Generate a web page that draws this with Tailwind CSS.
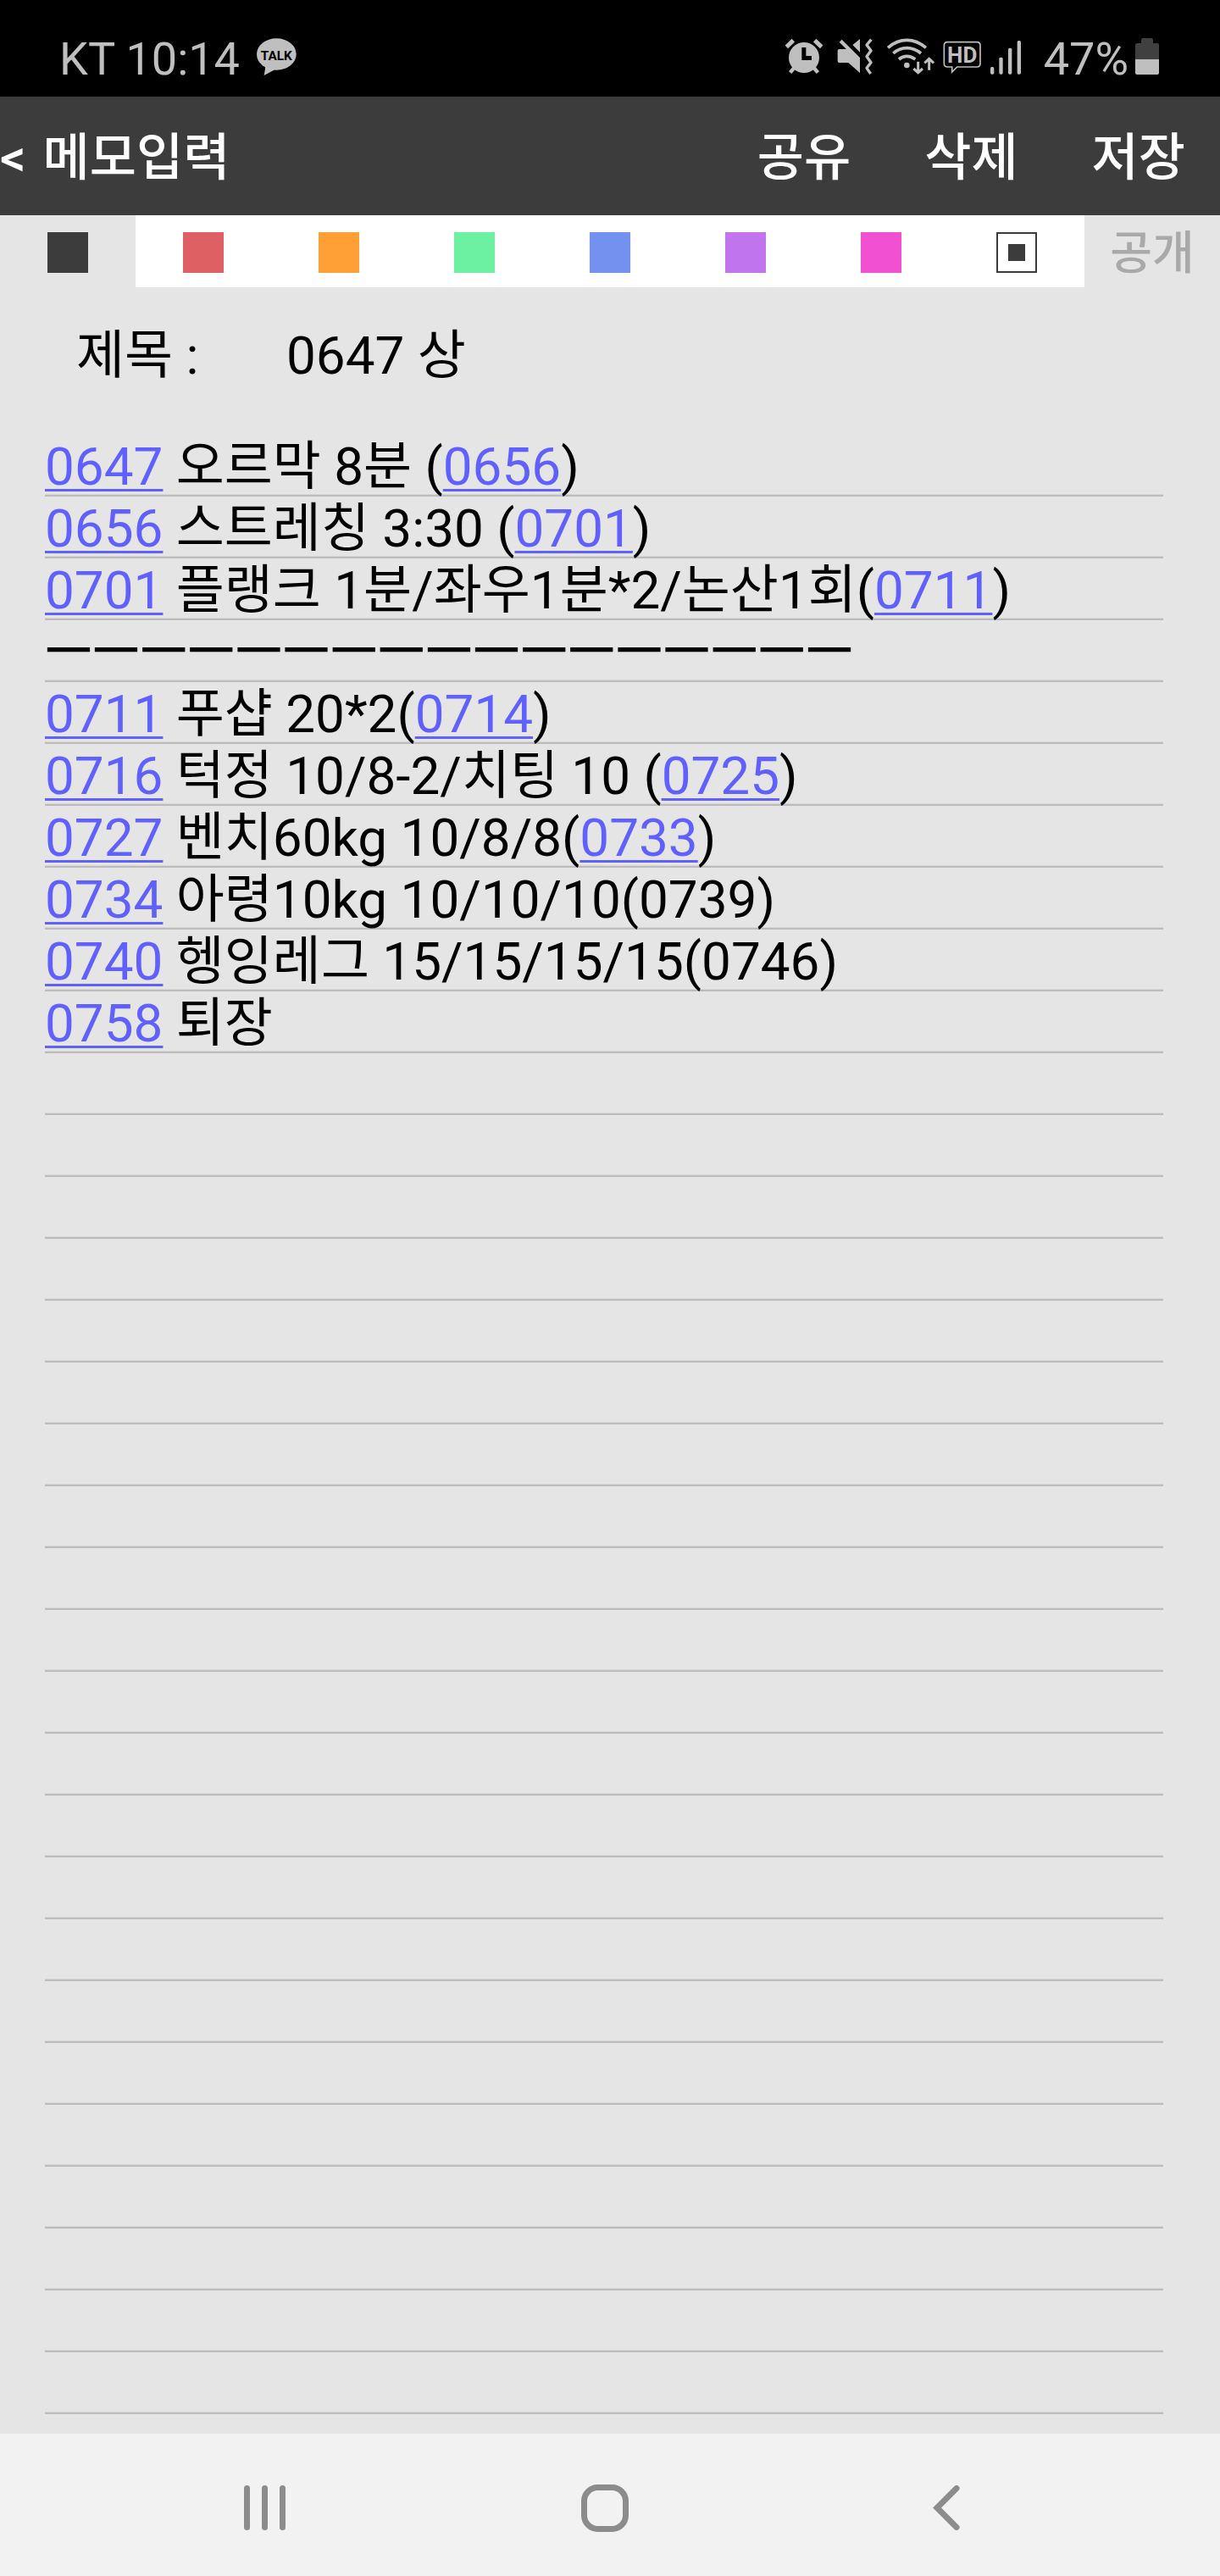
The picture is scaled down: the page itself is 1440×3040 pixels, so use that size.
<!DOCTYPE html>
<html lang="ko">
<head>
    <meta charset="UTF-8">
    <meta name="viewport" content="width=device-width, initial-scale=1.0">
    <title>메모입력</title>
    <script src="https://cdn.jsdelivr.net/npm/@tailwindcss/browser@4"></script>
</head>
<body class="bg-[#e5e5e5] min-h-screen flex flex-col text-black font-['Roboto','Noto_Sans_CJK_KR',sans-serif]">

    <!-- 상태 표시줄 -->
    <div class="h-[114px] pt-[19px] pl-[70px] pr-[72px] bg-black text-[#bfbfbf] text-[54px] leading-[60px] flex items-center justify-between">
        <div class="flex items-center gap-[19px]">
            <span class="pt-1.5">KT 10:14</span>
            <svg class="w-[49px] h-[46px]" viewBox="906 132 147 138" fill="currentColor">
                <ellipse cx="979" cy="192" rx="70" ry="56"/>
                <path d="M941 232L935 267L978 244z"/>
                <text x="979" y="212" text-anchor="middle" font-size="46" font-weight="700" fill="#000">TALK</text>
            </svg>
        </div>
        <div class="flex items-center gap-2">
            <svg class="w-[52px] h-[45px]" viewBox="72 72 156 135" fill="none" stroke="currentColor">
                <circle cx="147" cy="144" r="54" fill="currentColor" stroke="none"/>
                <path stroke-width="15" d="M85 106L109 83M185 83L209 106"/>
                <path stroke-width="13" d="M112 180L98 197M182 180L196 197"/>
                <path fill="#000" stroke="none" d="M139 108h15v30h20v15h-35z"/>
            </svg>
            <svg class="w-[52px] h-[45px]" viewBox="252 72 156 135" fill="currentColor">
                <path d="M272 114H297L272 89L281 80L345 144V198L304 162H272q-6 0-6-6V120q0-6 6-6z"/>
                <path d="M345 78V125L319 99z"/>
                <path fill="none" stroke="currentColor" stroke-width="10" stroke-linejoin="round" d="M385 80L369 99L384 119L369 140L384 161L369 181L383 201"/>
            </svg>
            <svg class="w-[60px] h-[45px]" viewBox="432 72 180 135" fill="none" stroke="currentColor">
                <path stroke-width="11" d="M444 109Q475 82 511 82T579 109M463 129Q484 110 511 110T561 129M483 150Q496 139 511 139T541 150"/>
                <circle cx="511" cy="171" r="10" fill="currentColor" stroke="none"/>
                <path stroke-width="9" d="M551 158V196M535 183L551 197L567 183M590 188V150M574 163L590 148L606 163"/>
            </svg>
            <svg class="w-[48px] h-[45px]" viewBox="636 72 144 135" fill="none" stroke="currentColor">
                <path stroke-width="5" d="M655 89H759q12 0 12 12V165q0 12-12 12H689L671 195V177H655q-12 0-12-12V101q0-12 12-12z"/>
                <text x="707" y="162" text-anchor="middle" font-size="78" font-weight="700" fill="currentColor" stroke="none">HD</text>
            </svg>
            <svg class="w-[40px] h-[45px]" viewBox="804 72 120 135" fill="currentColor">
                <rect x="807" y="177" width="13" height="26" rx="5"/>
                <rect x="838" y="143" width="13" height="60" rx="5"/>
                <rect x="870" y="110" width="13" height="93" rx="5"/>
                <rect x="902" y="84" width="13" height="119" rx="5"/>
            </svg>
            <span class="ml-4 pt-1.5">47%</span>
            <svg class="w-[28px] h-[45px]" viewBox="0 0 28 45">
                <path fill="#404040" d="M7 8V3q0-2 2-2H19q2 0 2 2V8z"/>
                <path fill="#404040" d="M0 27V9q0-2 2-2H26q2 0 2 2V27z"/>
                <path fill="#bfbfbf" d="M0 26H28V42q0 2-2 2H2q-2 0-2-2z"/>
            </svg>
        </div>
    </div>

    <!-- 상단 메뉴 -->
    <header class="h-[140px] pt-1.5 bg-[#3c3c3c] text-white text-[60px] leading-[66px] font-medium flex items-center justify-between pr-[41px]">
        <button type="button" class="flex gap-5"><span>&lt;</span><span>메모입력</span></button>
        <div class="flex gap-[87px]">
            <button type="button">공유</button>
            <button type="button">삭제</button>
            <button type="button">저장</button>
        </div>
    </header>

    <!-- 색상 선택 -->
    <div class="h-[85px] grid grid-cols-9">
        <label class="flex items-center justify-center pt-[3px] bg-white has-checked:bg-transparent">
            <input type="radio" name="color" aria-label="검정" checked class="appearance-none size-12 bg-[#3c3c3c]">
        </label>
        <label class="flex items-center justify-center pt-[3px] bg-white has-checked:bg-transparent">
            <input type="radio" name="color" aria-label="빨강" class="appearance-none size-12 bg-[#df6062]">
        </label>
        <label class="flex items-center justify-center pt-[3px] bg-white has-checked:bg-transparent">
            <input type="radio" name="color" aria-label="주황" class="appearance-none size-12 bg-[#ffa037]">
        </label>
        <label class="flex items-center justify-center pt-[3px] bg-white has-checked:bg-transparent">
            <input type="radio" name="color" aria-label="초록" class="appearance-none size-12 bg-[#6cf0a2]">
        </label>
        <label class="flex items-center justify-center pt-[3px] bg-white has-checked:bg-transparent">
            <input type="radio" name="color" aria-label="파랑" class="appearance-none size-12 bg-[#7391ef]">
        </label>
        <label class="flex items-center justify-center pt-[3px] bg-white has-checked:bg-transparent">
            <input type="radio" name="color" aria-label="보라" class="appearance-none size-12 bg-[#c074ee]">
        </label>
        <label class="flex items-center justify-center pt-[3px] bg-white has-checked:bg-transparent">
            <input type="radio" name="color" aria-label="분홍" class="appearance-none size-12 bg-[#f250d2]">
        </label>
        <label class="flex items-center justify-center pt-[3px] bg-white has-checked:bg-transparent">
            <input type="radio" name="color" aria-label="기본" class="appearance-none size-12 border-2 border-[#3c3c3c] grid place-items-center before:size-5 before:bg-[#3c3c3c]">
        </label>
        <button type="button" class="pt-1.5 text-[54px] leading-[60px] font-medium text-[#a9a9a9]">공개</button>
    </div>

    <!-- 제목 -->
    <div class="flex pt-12 pb-15 pl-[90px] pr-[67px] text-[62px] leading-[66px]">
        <label for="title" class="w-[248px]">제목 :</label>
        <input type="text" id="title" value="0647 상" class="flex-1 min-w-0 h-[66px] outline-none">
    </div>

    <!-- 메모 본문 (줄 간격 73px) -->
    <main class="flex-1 ml-[53px] mr-[67px] text-[62px] leading-[66px] bg-[repeating-linear-gradient(transparent_0_70px,#d6d6d6_70px_71px,#bcbcbc_71px_73px)] [&>p]:h-[73px] [&>p]:pt-[5px] [&>p]:whitespace-nowrap [&_a]:text-[#6060ff] [&_a]:underline [&_a]:decoration-3 [&_a]:underline-offset-5">
        <p><a href="tel:0647">0647</a> 오르막 8분 (<a href="tel:0656">0656</a>)</p>
        <p><a href="tel:0656">0656</a> 스트레칭 3:30 (<a href="tel:0701">0701</a>)</p>
        <p><a href="tel:0701">0701</a> 플랭크 1분/좌우1분*2/논산1회(<a href="tel:0711">0711</a>)</p>
        <p class="text-[61px] font-medium">ㅡㅡㅡㅡㅡㅡㅡㅡㅡㅡㅡㅡㅡㅡㅡㅡㅡ</p>
        <p><a href="tel:0711">0711</a> 푸샵 20*2(<a href="tel:0714">0714</a>)</p>
        <p><a href="tel:0716">0716</a> 턱정 10/8-2/치팅 10 (<a href="tel:0725">0725</a>)</p>
        <p><a href="tel:0727">0727</a> 벤치60kg 10/8/8(<a href="tel:0733">0733</a>)</p>
        <p><a href="tel:0734">0734</a> 아령10kg 10/10/10(0739)</p>
        <p><a href="tel:0740">0740</a> 헹잉레그 15/15/15/15(0746)</p>
        <p><a href="tel:0758">0758</a> 퇴장</p>
    </main>

    <!-- 하단 내비게이션 -->
    <nav class="h-[168px] bg-[#f2f2f2] text-[#8c8c8c] grid grid-cols-3 pl-[111px] pr-[122px] pt-[7px]">
        <button type="button" aria-label="최근 앱" class="grid place-items-center">
            <svg class="w-[49px] h-[53px]" viewBox="0 0 49 53" fill="currentColor">
                <rect x="0" width="7" height="53" rx="3.5"/>
                <rect x="21" width="7" height="53" rx="3.5"/>
                <rect x="42" width="7" height="53" rx="3.5"/>
            </svg>
        </button>
        <button type="button" aria-label="홈" class="grid place-items-center">
            <svg class="size-14" viewBox="0 0 56 56" fill="none" stroke="currentColor" stroke-width="7">
                <rect x="3.5" y="3.5" width="49" height="49" rx="16"/>
            </svg>
        </button>
        <button type="button" aria-label="뒤로" class="grid place-items-center">
            <svg class="w-[32px] h-[53px]" viewBox="0 0 32 53" fill="none" stroke="currentColor" stroke-width="7" stroke-linecap="round">
                <path d="M28 3.5L5 26.5L28 49.5"/>
            </svg>
        </button>
    </nav>

</body>
</html>
